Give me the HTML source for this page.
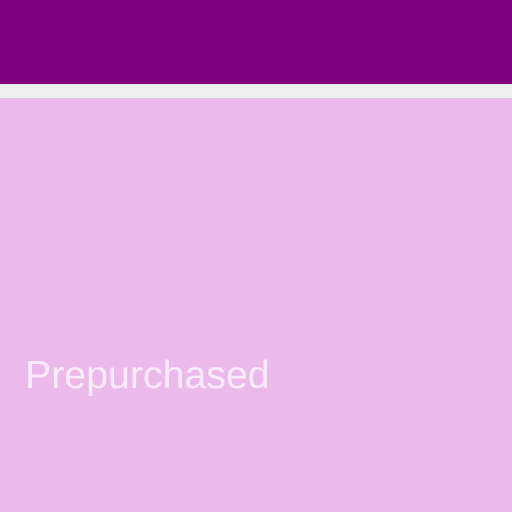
<!DOCTYPE html>
<html><head><style>
html,body{margin:0;padding:0;width:512px;height:512px;overflow:hidden;background:#ebbaeb;}
.top{position:absolute;left:0;top:0;width:512px;height:84px;background:#800080;}
.band{position:absolute;left:0;top:84px;width:512px;height:14px;background:#eeeeee;}
.t{position:absolute;left:25px;top:350px;font-family:"Liberation Sans",sans-serif;font-size:39.3px;line-height:50px;color:#fcebfc;white-space:nowrap;}
</style></head><body>
<div class="top"></div><div class="band"></div>
<div class="t">Prepurchased</div>
</body></html>
